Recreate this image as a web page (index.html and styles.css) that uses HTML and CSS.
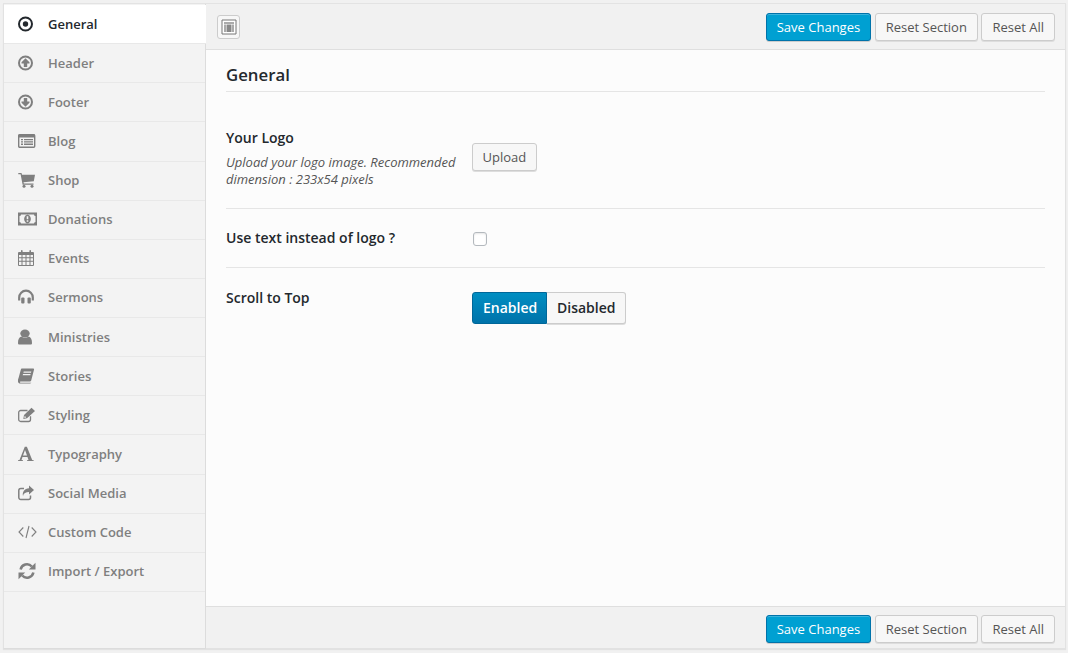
FILE: index.html
```html
<!DOCTYPE html>
<html lang="en">
<head>
    <meta charset="UTF-8">
    <title>Theme Options</title>
    <link rel="stylesheet" href="styles.css">
</head>
<body>
    <div class="panel">
        <ul class="sidebar">
            <li class="active">
                <svg viewBox="0 0 19 18"><circle cx="7.500" cy="9" r="6.500" fill="none" stroke="currentColor" stroke-width="2"/><circle cx="7.500" cy="9" r="2.700" fill="currentColor"/></svg>
                General
            </li>
            <li>
                <svg viewBox="0 0 19 18"><circle cx="7.500" cy="9" r="6.500" fill="none" stroke="currentColor" stroke-width="2"/><path d="M7.500 4.200 11.500 8.300V9.600H9.200V13H5.800V9.600H3.500V8.300Z" fill="currentColor"/></svg>
                Header
            </li>
            <li>
                <svg viewBox="0 0 19 18"><circle cx="7.500" cy="9" r="6.500" fill="none" stroke="currentColor" stroke-width="2"/><path d="M7.500 13.800 11.500 9.700V8.400H9.200V5H5.800V8.400H3.500V9.700Z" fill="currentColor"/></svg>
                Footer
            </li>
            <li>
                <svg viewBox="0 0 19 18"><rect x=".7" y="2.700" width="16" height="12.600" rx="1" fill="none" stroke="currentColor" stroke-width="1.400"/><path d="M.5 2.500H17V5.500H.5ZM3 7h2v1.300H3zM6 7h9v1.300H6zM3 9.300h2v1.300H3zM6 9.300h9v1.300H6zM3 11.600h2v1.300H3zM6 11.600h9v1.300H6z" fill="currentColor"/></svg>
                Blog
            </li>
            <li>
                <svg viewBox="0 0 19 18"><g transform="translate(0 .5)"><path d="M.3 1.500H3.500L4 3.200H17L15.800 9.800 5.500 10.800 5.800 12H15.500V13.200H4.600L2.600 2.700H.3Z" fill="currentColor"/><circle cx="6" cy="14.700" r="1.500" fill="currentColor"/><circle cx="14" cy="14.700" r="1.500" fill="currentColor"/></g></svg>
                Shop
            </li>
            <li>
                <svg viewBox="0 0 19 18"><path fill-rule="evenodd" d="M0 2.500H19V15.500H0ZM3 4.500A1.500 1.500 0 0 1 1.500 6V12A1.500 1.500 0 0 1 3 13.500H16A1.500 1.500 0 0 1 17.500 12V6A1.500 1.500 0 0 1 16 4.500ZM9.500 4.800A3.400 4.200 0 1 1 9.490 4.800ZM8.700 6.300V9.300H10.300V6.300ZM8.700 10.200V11.800H10.300V10.200Z" fill="currentColor"/></svg>
                Donations
            </li>
            <li>
                <svg viewBox="0 0 19 18"><path fill-rule="evenodd" transform="translate(0 1)" d="M1 2H3V.8A.8.8 0 0 1 4.600.8V2H11.400V.8A.8.8 0 0 1 13 .8V2H15A1 1 0 0 1 16 3V15A1 1 0 0 1 15 16H1A1 1 0 0 1 0 15V3A1 1 0 0 1 1 2ZM1 5V7.200H3.500V5ZM4.500 5V7.200H7.500V5ZM8.500 5V7.200H11.500V5ZM12.500 5V7.200H15V5ZM1 8.200V10.800H3.500V8.200ZM4.500 8.200V10.800H7.500V8.200ZM8.500 8.200V10.800H11.500V8.200ZM12.500 8.200V10.800H15V8.200ZM1 11.800V15H3.500V11.800ZM4.500 11.800V15H7.500V11.800ZM8.500 11.800V15H11.500V11.800ZM12.500 11.800V15H15V11.800Z" fill="currentColor"/></svg>
                Events
            </li>
            <li>
                <svg viewBox="0 0 19 18"><path d="M1.200 12.500V9.500A6.800 6.800 0 0 1 14.800 9.500V12.500" fill="none" stroke="currentColor" stroke-width="2.200"/><rect x="3.200" y="9.500" width="3.300" height="6" rx="1" fill="currentColor"/><rect x="9.500" y="9.500" width="3.300" height="6" rx="1" fill="currentColor"/></svg>
                Sermons
            </li>
            <li>
                <svg viewBox="0 0 19 18"><ellipse cx="7" cy="5.500" rx="4.700" ry="4" fill="currentColor"/><path d="M1.500 16.500C.5 16.500 0 16 0 15 0 11.500 1 9 3.500 8.500 4.500 9.300 5.700 9.700 7 9.700S9.500 9.300 10.500 8.500C13 9 14 11.500 14 15 14 16 13.500 16.500 12.500 16.500Z" fill="currentColor"/></svg>
                Ministries
            </li>
            <li>
                <svg viewBox="0 0 19 18"><path fill-rule="evenodd" d="M4 1.500H15.300C16 1.500 16.200 2 16 2.700L13.200 13.500C13 14.200 12.500 14.500 12 14.500H2.500C1.900 14.500 1.700 15.700 2.500 15.700H13.300C13 16.300 12.500 16.500 12 16.500H2.300C.5 16.500-.2 15-.1 13.500 0 12.500.3 11.500.7 10.500L2.800 2.800C3 2 3.400 1.500 4 1.500ZM5.700 4.500 5.400 5.700H13L13.300 4.500ZM5 7 4.700 8.200H12.300L12.600 7Z" fill="currentColor"/></svg>
                Stories
            </li>
            <li>
                <svg viewBox="0 0 19 18"><g transform="translate(0 1.500)"><path d="M12.500 8.800V12A2 2 0 0 1 10.500 14H2.700A2 2 0 0 1 .7 12V5A2 2 0 0 1 2.700 3H9.500" fill="none" stroke="currentColor" stroke-width="1.300"/><path d="M13.500 .2 17 3.500 9 10.800 5.300 11.500 6 7.500ZM6.800 8.200 6.300 10.500 8.200 10Z" fill="currentColor"/></g></svg>
                Styling
            </li>
            <li>
                <svg viewBox="0 0 19 18"><path fill-rule="evenodd" d="M0 16V15.200L1.500 15 6.800 1.700H8.900L14.200 15 15.700 15.200V16H9V15.200L10.500 15 9.500 12H4.500L3.500 15 5 15.200V16ZM5 10.600H9L7 5Z" fill="currentColor"/></svg>
                Typography
            </li>
            <li>
                <svg viewBox="0 0 19 18"><g transform="translate(0 1)"><path d="M6 3.400H3A2 2 0 0 0 .8 5.400V12.500A2 2 0 0 0 3 14.500H10.500A2 2 0 0 0 12.500 12.500V10.500" fill="none" stroke="currentColor" stroke-width="1.500"/><path d="M11 .5 16 5 11 9.500V7C8 7 5.500 8 5 11 4 7 6.500 3.500 11 3.200Z" fill="currentColor"/></g></svg>
                Social Media
            </li>
            <li>
                <svg viewBox="0 0 19 18"><g transform="translate(0 1)"><path d="M5.300 3.500 1 8 5.300 12.500M13.700 3.500 18 8 13.700 12.500M11 2 8 14" fill="none" stroke="currentColor" stroke-width="1.100"/></g></svg>
                Custom Code
            </li>
            <li>
                <svg viewBox="0 0 19 18"><path d="M2.600 7.500A6.500 6.500 0 0 1 13.800 4.500" fill="none" stroke="currentColor" stroke-width="2.500"/><path d="M17.500 .8V7.500H10.800Z" fill="currentColor"/><path d="M15.400 10.500A6.500 6.500 0 0 1 4.200 13.500" fill="none" stroke="currentColor" stroke-width="2.500"/><path d="M.5 17.200V10.500H7.200Z" fill="currentColor"/></svg>
                Import / Export
            </li>
        </ul>

        <div class="main">
            <div class="bar bar-top">
                <span class="expand"><svg viewBox="0 0 16 16"><path d="M1 1h14v14H1z" fill="#fff" stroke="#777"/><path d="M3 3h10v2H3zM3 5.500h2V13H3zM11 5.500h2V13h-2z" fill="#aaa"/><path d="M5.500 5.500h5V13h-5z" fill="#888"/></svg></span>
                <span class="actions">
                    <button class="btn btn-primary">Save Changes</button>
                    <button class="btn">Reset Section</button>
                    <button class="btn">Reset All</button>
                </span>
            </div>

            <div class="content">
                <h2>General</h2>
                <div class="row row-logo">
                    <div class="label">
                        <h4>Your Logo</h4>
                        <p>Upload your logo image. Recommended dimension : 233x54 pixels</p>
                    </div>
                    <button class="btn btn-upload">Upload</button>
                </div>
                <div class="row row-text">
                    <div class="label"><h4>Use text instead of logo ?</h4></div>
                    <span class="checkbox"></span>
                </div>
                <div class="row row-scroll">
                    <div class="label"><h4>Scroll to Top</h4></div>
                    <div class="switch">
                        <span class="on">Enabled</span><span class="off">Disabled</span>
                    </div>
                </div>
            </div>

            <div class="bar bar-bottom">
                <span class="actions">
                    <button class="btn btn-primary">Save Changes</button>
                    <button class="btn">Reset Section</button>
                    <button class="btn">Reset All</button>
                </span>
            </div>
        </div>
    </div>
</body>
</html>
```

FILE: styles.css
```css
* {
    box-sizing: border-box;
}
html, body {
    height: 100%;
    margin: 0;
}
body {
    padding: 4px 2px 3px 3px;
    background: #f1f1f1;
    font-family: "Open Sans", sans-serif;
    color: #222;
    overflow: hidden;
}
.panel {
    display: flex;
    height: 646px;
    border-top: 1px solid #e3e3e3;
    margin-top: -1px;
    box-shadow: 0 1px 1px rgba(0, 0, 0, 0.06);
}
.sidebar {
    width: 203px;
    margin: 0;
    padding: 1px 0 0 0;
    list-style: none;
    background: #f3f3f3;
    border-left: 1px solid #e2e2e2;
    border-right: 1px solid #dcdcdc;
    border-bottom: 1px solid #dcdcdc;
}
.sidebar li {
    display: flex;
    align-items: center;
    height: 39.14px;
    padding: 0 0 1px 14px;
    border-bottom: 1px solid #e8e8e8;
    font-size: 13px;
    font-weight: 600;
    color: #7f7f7f;
}
.sidebar li svg {
    width: 19px;
    height: 18px;
    margin-right: 11px;
    flex: none;
}
.sidebar li.active {
    background: #fff;
    color: #23282d;
    margin-right: -1px;
    position: relative;
}
.main {
    flex: 1;
    display: flex;
    flex-direction: column;
    background: #fcfcfc;
    border-right: 1px solid #e2e2e2;
}
.bar {
    display: flex;
    align-items: center;
    justify-content: space-between;
    background: #f1f1f1;
    padding: 0 10px 0 11px;
    flex: none;
}
.bar-top {
    height: 46px;
    border-bottom: 1px solid #dfdfdf;
}
.bar-bottom {
    height: 43px;
    padding-bottom: 5px;
    align-items: flex-end;
    justify-content: flex-end;
    border-top: 1px solid #dfdfdf;
    border-bottom: 1px solid #e2e2e2;
}
.expand {
    display: flex;
    align-items: center;
    justify-content: center;
    width: 23px;
    height: 24px;
    background: #f7f7f7;
    border: 1px solid #ccc;
    border-radius: 3px;
}
.expand svg {
    width: 16px;
    height: 16px;
}
.actions {
    display: flex;
    gap: 3.500px;
}
.btn {
    height: 28px;
    padding: 0 10px;
    background: #f7f7f7;
    border: 1px solid #ccc;
    border-radius: 3px;
    box-shadow: 0 1px 0 #ddd;
    font-family: inherit;
    font-size: 13px;
    color: #555;
    white-space: nowrap;
}
.btn-primary {
    background: #00a0d2;
    border-color: #0073aa;
    box-shadow: inset 0 1px 0 rgba(120, 200, 230, 0.5), 0 1px 0 rgba(0, 0, 0, 0.15);
    color: #fff;
}
.content {
    flex: 1;
    padding: 0 20px;
}
.content h2 {
    margin: 0;
    height: 42px;
    padding-top: 13px;
    font-size: 16.800px;
    line-height: 24px;
    font-weight: 600;
    color: #23282d;
    border-bottom: 1px solid #e5e5e5;
}
.row {
    display: flex;
    align-items: flex-start;
    border-bottom: 1px solid #e5e5e5;
}
.row:last-child {
    border-bottom: 0;
}
.label {
    width: 246px;
    flex: none;
}
.label h4 {
    margin: 0;
    font-size: 14px;
    line-height: 20px;
    font-weight: 600;
    color: #23282d;
}
.label p {
    margin: 6px 0 0 0;
    font-size: 13px;
    line-height: 17px;
    font-style: italic;
    color: #555;
    width: 235px;
}
.row-logo {
    height: 117px;
    padding-top: 36px;
}
.btn-upload {
    margin-top: 15px;
    padding: 0 9.500px;
}
.row-text {
    height: 59px;
    padding-top: 19px;
}
.checkbox {
    display: block;
    width: 14px;
    height: 14px;
    margin-top: 4px;
    margin-left: 1px;
    background: #fff;
    border: 1px solid #b4b9be;
    border-radius: 3px;
    box-shadow: inset 0 1px 2px rgba(0, 0, 0, 0.1);
}
.row-scroll {
    padding-top: 20px;
}
.switch {
    display: flex;
    height: 32px;
    margin-top: 4px;
    font-size: 14px;
    font-weight: 600;
    line-height: 30px;
}
.switch span {
    display: block;
    border: 1px solid #ccc;
}
.switch .on {
    width: 75px;
    padding-left: 10px;
    background: linear-gradient(#008ec2, #0073aa);
    border-color: #006799;
    border-radius: 3px 0 0 3px;
    color: #fff;
}
.switch .off {
    width: 79px;
    padding-left: 10px;
    background: #f7f7f7;
    border-left: 0;
    border-radius: 0 3px 3px 0;
    box-shadow: 0 1px 0 #ddd;
    color: #23282d;
}
```
